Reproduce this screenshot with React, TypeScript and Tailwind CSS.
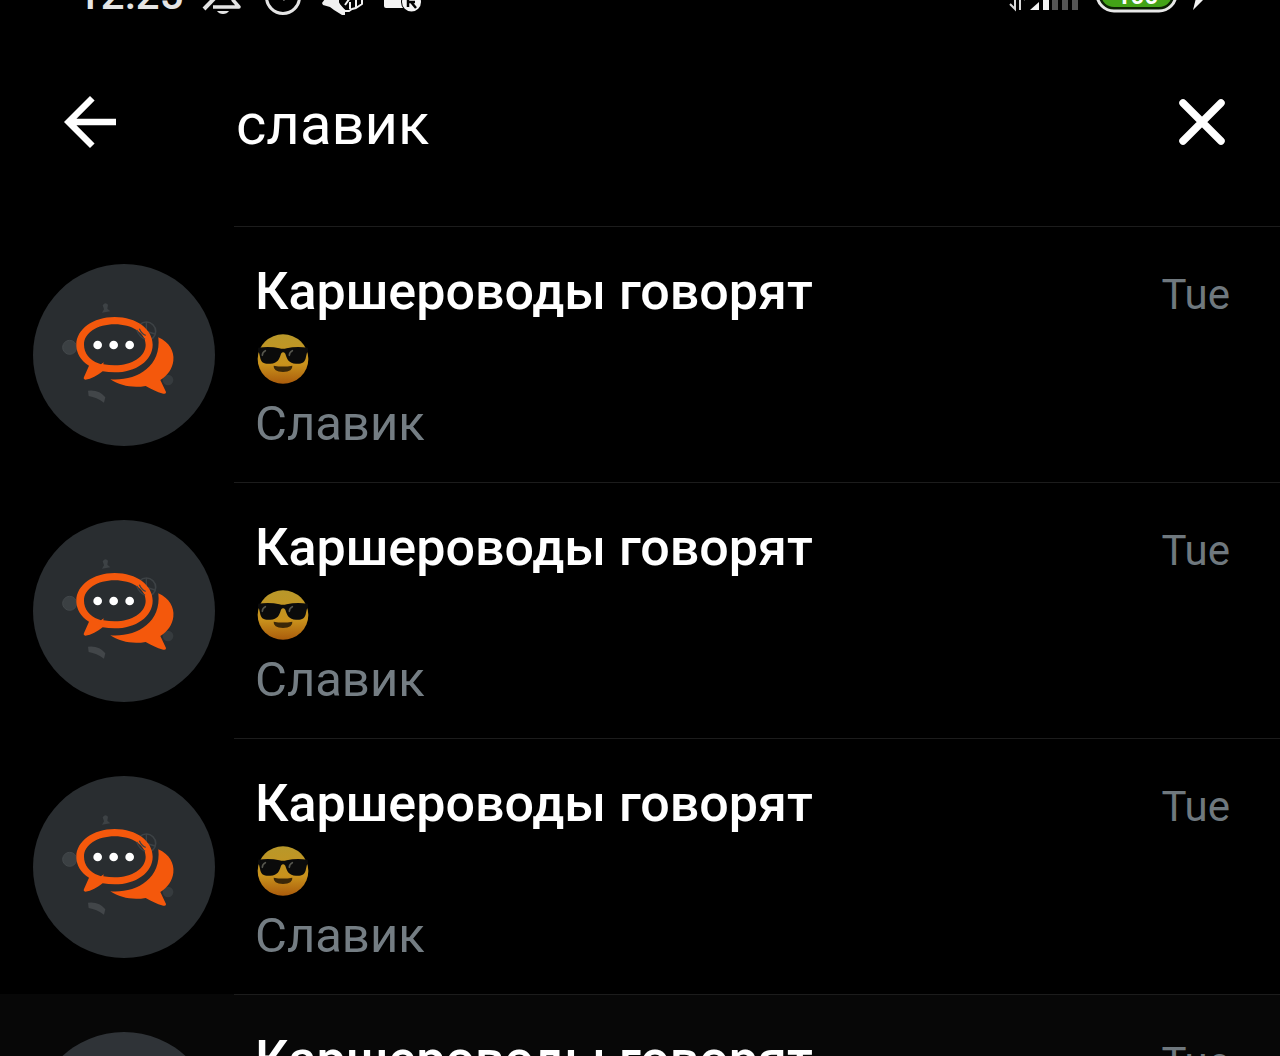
import { useState } from 'react';

const chats = [
    { id: 1, title: 'Каршероводы говорят', sender: 'Славик', date: 'Tue', pressed: false },
    { id: 2, title: 'Каршероводы говорят', sender: 'Славик', date: 'Tue', pressed: false },
    { id: 3, title: 'Каршероводы говорят', sender: 'Славик', date: 'Tue', pressed: false },
    { id: 4, title: 'Каршероводы говорят', sender: 'Славик', date: 'Tue', pressed: true },
];

const StatusBar = () => {
    return (
        <div className="h-4 shrink-0 overflow-hidden flex items-end">
            <div className="w-full h-[42px] shrink-0 flex items-center justify-between pl-[77px] pr-[72px]">
                <div className="flex items-center gap-4">
                    <span className="text-[42px] leading-[42px] font-medium text-[#e4e4e4]">12:25</span>
                    <svg className="w-[222px] h-[42px]" viewBox="200 -26 222 42" fill="none">
                        {/* muted bell */}
                        <path d="M213 7H239L233 0V-8a11 11 0 0 0-17-9" stroke="#e4e4e4" strokeWidth="3.500" strokeLinejoin="round" />
                        <path d="M204 9 236 -24" stroke="#e4e4e4" strokeWidth="4" />
                        <path d="M217 11h12q-2 3-6 3t-6-3z" fill="#e4e4e4" />
                        {/* alarm */}
                        <circle cx="283" cy="-3" r="16.500" stroke="#e4e4e4" strokeWidth="3" />
                        <path d="M283-13v10l2 3" stroke="#e4e4e4" strokeWidth="3" />
                        {/* hand */}
                        <path d="M322 3 325-1V-12H339V3L345 10V15L342 15 334 10 330 7 323 5z" fill="#f0f0f0" />
                        <path
                            d="M338-6V2Q339 8 345 11L349 11 352 9 356 8 359 6 362 4V-6M345 5 350-2V-6M350 9V2M356 7V-6"
                            stroke="#f0f0f0"
                            strokeWidth="2"
                            strokeLinejoin="round"
                        />
                        <circle cx="341" cy="2" r="1.500" fill="#000" />
                        {/* camera */}
                        <path d="M384-12h24v20h-22q-2 0-2-2z" fill="#f4f4f4" />
                        <circle cx="411.500" cy="2" r="10.500" fill="#000" />
                        <circle cx="411.500" cy="2" r="9.500" fill="#f4f4f4" />
                        <path d="M408-4v11M408 2h7M411 2l5 6" stroke="#000" strokeWidth="2.500" />
                    </svg>
                </div>
                <svg className="w-[200px] h-[42px]" viewBox="1008 -26 200 42" fill="none">
                    <path d="M1015-8V9L1010 4M1020 10V-8l5 8" stroke="#d8d8d8" strokeWidth="2" />
                    <path d="M1030 10 1039 2V10z" fill="#f4f4f4" />
                    <path d="M1043-4h6V10h-6z" fill="#f4f4f4" />
                    <path d="M1052-8h6V10h-6zM1062-12h6V10h-6zM1072-16h6V10h-6z" fill="#555" />
                    <rect x="1097" y="-23" width="79" height="34" rx="17" fill="#0d2204" stroke="#e8e8e8" strokeWidth="3" />
                    <rect x="1101" y="-19" width="71" height="26" rx="13" fill="#43a317" />
                    <text x="1137.500" y="4" textAnchor="middle" fill="#fff" fontSize="24" fontWeight="700">
                        100
                    </text>
                    <path d="M1193 10 1197-6H1192L1202-22V-10H1208L1203 0z" fill="#f4f4f4" />
                </svg>
            </div>
        </div>
    );
};

const Avatar = () => {
    return (
        <svg className="size-[182px] shrink-0" viewBox="39 42 546 546">
            <circle cx="312" cy="315" r="273" fill="currentColor" />
            {/* faint doodles behind the bubbles */}
            <circle cx="149" cy="292" r="21" fill="#3b4043" stroke="#43484b" strokeWidth="3" />
            <path d="M248 166q8-12 16-2l-2 12 9 8-25 4 6-10z" fill="#3d4245" />
            <circle cx="379" cy="244" r="28" fill="none" stroke="#3d4245" strokeWidth="5" />
            <path d="M379 216v56M353 236l52 16" stroke="#3d4245" strokeWidth="4" />
            <path d="M204 422q34-4 52 20l-4 16q-22-16-46-20z" fill="#424649" />
            <circle cx="444" cy="390" r="16" fill="#363b3e" />
            {/* back bubble */}
            <path
                d="M415 262C448 277 463 304 460 332C457 356 443 376 421 390L438 426Q439 433 430 431C409 426 394 417 377 408C337 415 300 407 271 388C345 394 425 354 415 262Z"
                fill="#f4580c"
            />
            {/* front bubble */}
            <path
                d="M284 201C350 201 398 238 398 284C398 332 347 367 284 367Q265 367 248 364C232 376 214 388 196 389Q189 388 192 381L207 347C182 331 169 309 169 284C169 238 219 201 284 201Z"
                fill="#f4580c"
            />
            <path
                d="M284 223C336 223 377 249 377 284C377 319 336 346 284 346Q268 346 250 343L251 337L243 343L235 340C209 330 192 309 192 284C192 249 232 223 284 223Z"
                fill="currentColor"
            />
            <path d="M350 240q8 20 25 28M358 236q7 16 19 20" stroke="#3d4245" strokeWidth="4" fill="none" />
            <circle cx="233" cy="285" r="13" fill="#fff" />
            <circle cx="281" cy="285" r="13" fill="#fff" />
            <circle cx="329" cy="285" r="13" fill="#fff" />
        </svg>
    );
};

const CoolEmoji = () => {
    return (
        <svg className="w-[54px] h-[52px]" viewBox="47 247 162 156" role="img" aria-label="smiling face with sunglasses">
            <defs>
                <linearGradient id="face" x1="0" y1="0" x2="0" y2="1">
                    <stop offset="0" stopColor="#b8982a" />
                    <stop offset="0.6" stopColor="#c9921c" />
                    <stop offset="1" stopColor="#aa5c0c" />
                </linearGradient>
            </defs>
            <ellipse cx="131" cy="325" rx="76" ry="74" fill="url(#face)" />
            <path
                d="M57 291Q92 286 120 293Q131 296 142 293Q170 286 205 291L206 301Q201 307 200 318C197 337 186 340 170 339C148 338 143 325 138 309Q131 301 125 309C120 325 115 338 93 339C75 340 65 337 62 318Q61 307 56 301Z"
                fill="#0b0b0b"
            />
            <path d="M69 314Q69 304 78 300M150 314Q150 304 159 300" stroke="#56564e" strokeWidth="5" strokeLinecap="round" fill="none" />
            <path d="M103 345Q131 350 159 345Q161 362 131 364Q101 362 103 345Z" fill="#3a2708" />
        </svg>
    );
};

const App = () => {
    const [query, setQuery] = useState('славик');

    return (
        <div className="h-screen overflow-hidden flex flex-col bg-black text-white font-[Roboto,sans-serif]">
            <StatusBar />

            <header className="h-[210px] shrink-0 grid grid-cols-[234px_1fr_auto] items-center pt-0.5 pr-[39px]">
                <button aria-label="Back" className="ml-[51px] size-[78px]">
                    <svg className="size-full" viewBox="0 0 24 24" fill="currentColor">
                        <path d="M20 11H7.830l5.590-5.590L12 4l-8 8 8 8 1.410-1.410L7.830 13H20v-2z" />
                    </svg>
                </button>
                <input
                    aria-label="Search"
                    value={query}
                    onChange={(e) => setQuery(e.target.value)}
                    className="min-w-0 h-20 pt-1 pl-0.5 bg-transparent text-[58px] outline-none"
                />
                <button aria-label="Clear" className="size-[78px]" onClick={() => setQuery('')}>
                    <svg className="size-full" viewBox="0 0 78 78" fill="none" stroke="currentColor" strokeWidth="7.500" strokeLinecap="round">
                        <path d="M20 20 58 58M58 20 20 58" />
                    </svg>
                </button>
            </header>

            <ul>
                {chats.map((chat) => (
                    <li key={chat.id} className={chat.pressed ? 'h-64 flex bg-[#070707]' : 'h-64 flex'}>
                        <div className={chat.pressed ? 'pl-[33px] pt-[38px] pr-[19px] text-[#2f3337]' : 'pl-[33px] pt-[38px] pr-[19px] text-[#292d30]'}>
                            <Avatar />
                        </div>
                        <div className="flex-1 min-w-0 border-t border-[#1c1c1c] pl-[21px] pr-[50px] pt-[33px]">
                            <div className="flex items-baseline justify-between leading-[64px]">
                                <h2 className="text-[52px] font-medium truncate">{chat.title}</h2>
                                <span className="text-[42px] text-[#6f787e]">{chat.date}</span>
                            </div>
                            <div className="h-16 flex items-center">
                                <CoolEmoji />
                            </div>
                            <p className="text-[49px] leading-[66px] text-[#747d83]">{chat.sender}</p>
                        </div>
                    </li>
                ))}
            </ul>
        </div>
    );
};

export default App;
